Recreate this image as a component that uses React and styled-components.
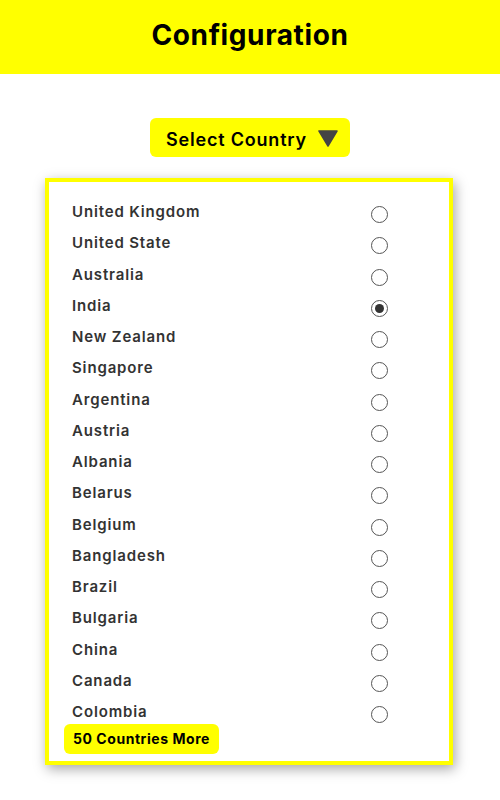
import React, { useState } from 'react';
import styled, { createGlobalStyle } from 'styled-components';

const GlobalStyle = createGlobalStyle`
  html, body {
    margin: 0;
    padding: 0;
    background: #ffffff;
    font-family: Inter, "Open Sans", sans-serif;
  }
`;

const Page = styled.div`
  width: 500px;
  min-height: 800px;
  display: flex;
  flex-direction: column;
  align-items: center;
`;

const Header = styled.header`
  width: 100%;
  height: 74px;
  padding-bottom: 4px;
  box-sizing: border-box;
  background-color: #ffff00;
  display: flex;
  justify-content: center;
  align-items: center;
`;

const Title = styled.h1`
  margin: 0;
  font-size: 28px;
  font-weight: 700;
  color: #000000;
  letter-spacing: 0.6px;
`;

const SelectButton = styled.button`
  margin-top: 44px;
  width: 200px;
  height: 39px;
  border: none;
  border-radius: 6px;
  background-color: #ffff00;
  display: flex;
  align-items: center;
  justify-content: center;
  gap: 11px;
  font-family: inherit;
  font-size: 18px;
  font-weight: 600;
  letter-spacing: 0.8px;
  color: #000000;
  padding: 3px 0 0 4px;
  box-sizing: border-box;
  cursor: pointer;

  svg {
    margin-top: -2px;
  }
`;

const Card = styled.div`
  margin-top: 21px;
  margin-right: 2px;
  width: 408px;
  height: 587px;
  border: 4px solid #ffff00;
  background: #ffffff;
  box-shadow: 2px 4px 12px rgba(0, 0, 0, 0.35);
  padding: 14px 0 0 23px;
  box-sizing: border-box;
  display: flex;
  flex-direction: column;
`;

const List = styled.ul`
  list-style: none;
  margin: 0;
  padding: 0;
`;

const Row = styled.li`
  height: 31.25px;
  display: flex;
  align-items: center;
  justify-content: space-between;
  width: 316px;
`;

const CountryName = styled.span`
  font-size: 15px;
  font-weight: 600;
  color: #333333;
  letter-spacing: 0.85px;
`;

const Radio = styled.span`
  width: 17px;
  height: 17px;
  box-sizing: border-box;
  border-radius: 50%;
  border: 1.8px solid #555555;
  display: flex;
  align-items: center;
  justify-content: center;
  margin-top: 6px;

  &::after {
    content: '';
    width: 9px;
    height: 9px;
    border-radius: 50%;
    background: #333333;
    display: ${({ checked }) => (checked ? 'block' : 'none')};
  }
`;

const MoreBadge = styled.div`
  margin-top: -3px;
  margin-left: -8px;
  align-self: flex-start;
  background-color: #ffff00;
  border-radius: 6px;
  padding: 6px 9px 7px;
  font-size: 14px;
  font-weight: 700;
  color: #000000;
  letter-spacing: 0.55px;
`;

const Caret = () => (
  <svg width="20" height="17" viewBox="0 0 20 17">
    <path d="M1 1 H19 L10 16 Z" fill="#444444" stroke="#444444" strokeWidth="1.5" strokeLinejoin="round" />
  </svg>
);

const countries = [
  'United Kingdom',
  'United State',
  'Australia',
  'India',
  'New Zealand',
  'Singapore',
  'Argentina',
  'Austria',
  'Albania',
  'Belarus',
  'Belgium',
  'Bangladesh',
  'Brazil',
  'Bulgaria',
  'China',
  'Canada',
  'Colombia',
];

export default function App() {
  const [selected, setSelected] = useState('India');

  return (
    <Page>
      <GlobalStyle />
      <Header>
        <Title>Configuration</Title>
      </Header>
      <SelectButton>
        Select Country
        <Caret />
      </SelectButton>
      <Card>
        <List>
          {countries.map((name) => (
            <Row key={name} onClick={() => setSelected(name)}>
              <CountryName>{name}</CountryName>
              <Radio checked={selected === name} />
            </Row>
          ))}
        </List>
        <MoreBadge>50 Countries More</MoreBadge>
      </Card>
    </Page>
  );
}
